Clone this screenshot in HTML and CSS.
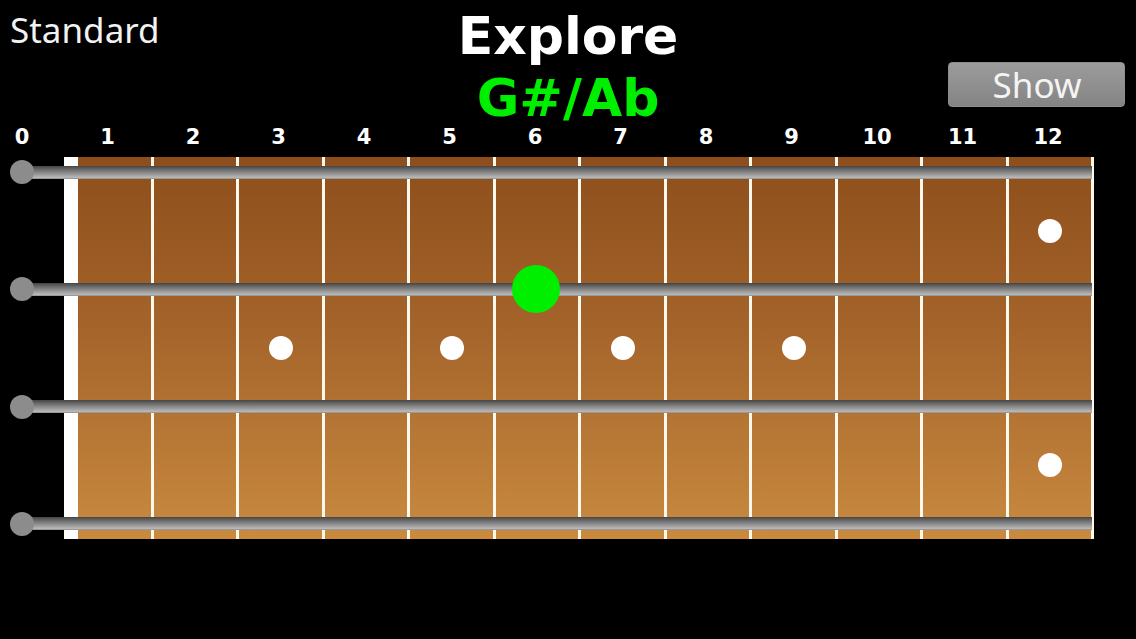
FILE: index.html
```html
<!DOCTYPE html>
<html lang="en">
<head>
<meta charset="utf-8">
<title>Explore</title>
<link rel="stylesheet" href="styles.css">
</head>
<body>
<div class="app">
  <header class="top">
    <div class="tuning">Standard</div>
    <div class="title">
      <div class="mode">Explore</div>
      <div class="note">G#/Ab</div>
    </div>
    <div class="actions"><button class="show">Show</button></div>
  </header>

  <div class="fret-numbers">
    <span>0</span><span>1</span><span>2</span><span>3</span><span>4</span><span>5</span><span>6</span><span>7</span><span>8</span><span>9</span><span>10</span><span>11</span><span>12</span>
  </div>

  <div class="neck">
    <div class="board">
      <div class="nut"></div>
      <div class="fret f1"><i></i><i></i><i></i></div>
      <div class="fret"><i></i><i></i><i></i></div>
      <div class="fret"><i></i><b class="inlay"></b><i></i></div>
      <div class="fret"><i></i><i></i><i></i></div>
      <div class="fret"><i></i><b class="inlay"></b><i></i></div>
      <div class="fret"><i></i><i></i><i></i><span class="played"></span></div>
      <div class="fret"><i></i><b class="inlay"></b><i></i></div>
      <div class="fret"><i></i><i></i><i></i></div>
      <div class="fret"><i></i><b class="inlay"></b><i></i></div>
      <div class="fret"><i></i><i></i><i></i></div>
      <div class="fret"><i></i><i></i><i></i></div>
      <div class="fret"><b class="inlay"></b><i></i><b class="inlay"></b></div>
    </div>
    <div class="strings">
      <div class="string"><span class="peg"></span><span class="wire"></span></div>
      <div class="string"><span class="peg"></span><span class="wire"></span></div>
      <div class="string"><span class="peg"></span><span class="wire"></span></div>
      <div class="string"><span class="peg"></span><span class="wire"></span></div>
    </div>
  </div>
</div>
</body>
</html>
```

FILE: styles.css
```css
html, body {
  margin: 0;
  padding: 0;
  background: #000;
}

.app {
  width: 1136px;
  height: 639px;
  background: #000;
  overflow: hidden;
}

.top {
  display: grid;
  grid-template-columns: 1fr auto 1fr;
  height: 124px;
}

.tuning {
  font-family: "Noto Sans", "Open Sans", sans-serif;
  font-size: 35px;
  line-height: 40px;
  color: #f2f2f2;
  padding: 10px 0 0 10px;
}

.title {
  text-align: center;
  font-family: "DejaVu Sans", Verdana, sans-serif;
  font-weight: bold;
  font-size: 52px;
  line-height: 50px;
  padding-top: 11px;
}

.mode {
  color: #fff;
}

.note {
  color: #00ee00;
  margin-top: 12px;
}

.actions {
  display: flex;
  justify-content: flex-end;
  align-items: flex-start;
  padding: 62px 11px 0 0;
}

.show {
  width: 177px;
  height: 45px;
  border: 1px solid #8e8e8e;
  border-radius: 4px;
  background: linear-gradient(to bottom, #9c9c9c, #848484);
  color: #f4f4f4;
  font-family: "Noto Sans", "Open Sans", sans-serif;
  font-size: 35px;
  line-height: 40px;
  padding: 0 0 0 1px;
}

.fret-numbers {
  display: flex;
  gap: 41.5px;
  height: 33px;
  box-sizing: border-box;
  padding-top: 3px;
  font-family: "DejaVu Sans", Verdana, sans-serif;
  font-weight: bold;
  font-size: 21px;
  line-height: 20px;
  color: #fff;
}

.fret-numbers span {
  width: 44px;
  flex: none;
  text-align: center;
}

.neck {
  position: relative;
  width: 1094px;
  height: 382px;
}

.board {
  display: grid;
  grid-template-columns: 14px 75.75px repeat(11, 85.5px);
  height: 382px;
  margin-left: 64px;
  background: linear-gradient(to bottom, #8e4e1b 0%, #a5642a 45%, #c98a40 100%);
}

.nut {
  background: #fff;
}

.fret {
  position: relative;
  display: flex;
  flex-direction: column;
  padding: 15px 0;
  border-right: 3px solid #fff8ec;
  box-sizing: border-box;
}

.fret i,
.fret .inlay {
  flex: 1;
  display: flex;
}

.fret .inlay::after {
  content: "";
  width: 24px;
  height: 24px;
  margin: auto;
  border-radius: 50%;
  background: #fff;
}

.played {
  position: absolute;
  z-index: 2;
  left: 50%;
  top: 132.3px;
  width: 48px;
  height: 48px;
  margin: -24px 0 0 -25px;
  border-radius: 50%;
  background: #00ee00;
}

.strings {
  position: absolute;
  z-index: 1;
  left: 10px;
  right: 2px;
  top: 0;
  bottom: 0;
  display: flex;
  flex-direction: column;
  justify-content: space-between;
  padding: 3px 0;
}

.string {
  position: relative;
  display: flex;
  align-items: center;
  height: 24px;
}

.wire {
  flex: 1;
  height: 13px;
  margin-left: -12px;
  background: linear-gradient(to bottom, #454545 0%, #6e6e6e 30%, #9a9a9a 65%, #b8b8b8 88%, #8a8a8a 100%);
}

.peg {
  position: relative;
  z-index: 1;
  width: 24px;
  height: 24px;
  flex: none;
  border-radius: 50%;
  background: #8c8c8c;
}
```
